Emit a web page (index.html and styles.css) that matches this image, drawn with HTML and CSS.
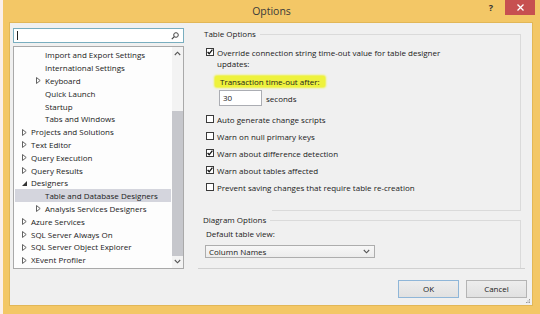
FILE: index.html
```html
<!DOCTYPE html>
<html lang="en">
<head>
    <meta charset="UTF-8">
    <title>Options</title>
    <link rel="stylesheet" href="styles.css">
</head>
<body>

<div class="window">
    <div class="titlebar">
        <span></span>
        <span class="title">Options</span>
        <div class="controls">
            <span class="help">?</span>
            <span class="close">
                <svg width="7" height="7" viewBox="0 0 7 7">
                    <path d="M0.5 0.5 L6.5 6.5 M6.5 0.5 L0.5 6.5" stroke="white" stroke-width="1.3"/>
                </svg>
            </span>
        </div>
    </div>

    <div class="client">
        <!-- arbol de categorias -->
        <div class="left">
            <div class="search">
                <span class="caret"></span>
                <svg class="lupa" width="8" height="8" viewBox="0 0 8 8">
                    <circle cx="5" cy="3" r="2.3" fill="none" stroke="#444" stroke-width="1"/>
                    <line x1="3.3" y1="4.7" x2="0.8" y2="7.2" stroke="#444" stroke-width="1.2"/>
                </svg>
            </div>
            <div class="tree">
                <ul class="nodes">
                    <li class="l2"><span class="twisty"></span>Import and Export Settings</li>
                    <li class="l2"><span class="twisty"></span>International Settings</li>
                    <li class="l2"><span class="twisty closed"></span>Keyboard</li>
                    <li class="l2"><span class="twisty"></span>Quick Launch</li>
                    <li class="l2"><span class="twisty"></span>Startup</li>
                    <li class="l2"><span class="twisty"></span>Tabs and Windows</li>
                    <li class="l1"><span class="twisty closed"></span>Projects and Solutions</li>
                    <li class="l1"><span class="twisty closed"></span>Text Editor</li>
                    <li class="l1"><span class="twisty closed"></span>Query Execution</li>
                    <li class="l1"><span class="twisty closed"></span>Query Results</li>
                    <li class="l1"><span class="twisty open"></span>Designers</li>
                    <li class="l2 selected"><span class="twisty"></span>Table and Database Designers</li>
                    <li class="l2"><span class="twisty closed"></span>Analysis Services Designers</li>
                    <li class="l1"><span class="twisty closed"></span>Azure Services</li>
                    <li class="l1"><span class="twisty closed"></span>SQL Server Always On</li>
                    <li class="l1"><span class="twisty closed"></span>SQL Server Object Explorer</li>
                    <li class="l1"><span class="twisty closed"></span>XEvent Profiler</li>
                </ul>
                <div class="scrollbar">
                    <div class="sb-arrow">
                        <svg width="7" height="5" viewBox="0 0 7 5"><polyline points="0.8,4 3.5,1.2 6.2,4" fill="none" stroke="#555" stroke-width="1.1"/></svg>
                    </div>
                    <div class="sb-track"><div class="sb-thumb"></div></div>
                    <div class="sb-arrow">
                        <svg width="7" height="5" viewBox="0 0 7 5"><polyline points="0.8,1 3.5,3.8 6.2,1" fill="none" stroke="#555" stroke-width="1.1"/></svg>
                    </div>
                </div>
            </div>
        </div>

        <!-- opciones del disenador -->
        <div class="right">
            <div class="group">
                <div class="group-head"><span>Table Options</span><i class="rule"></i></div>
                <div class="group-body first">
                    <div class="check top">
                        <span class="box on"></span>
                        <span>Override connection string time-out value for table designer<br>updates:</span>
                    </div>
                    <div class="hl">Transaction time-out after:</div>
                    <div class="timeout">
                        <span class="num">30</span>
                        <span>seconds</span>
                    </div>
                    <div class="check opt first-opt"><span class="box"></span>Auto generate change scripts</div>
                    <div class="check opt"><span class="box"></span>Warn on null primary keys</div>
                    <div class="check opt"><span class="box on"></span>Warn about difference detection</div>
                    <div class="check opt"><span class="box on"></span>Warn about tables affected</div>
                    <div class="check opt"><span class="box"></span>Prevent saving changes that require table re-creation</div>
                </div>
            </div>

            <div class="group second">
                <div class="group-head"><span>Diagram Options</span><i class="rule"></i></div>
                <div class="group-body">
                    <div class="field-label">Default table view:</div>
                    <div class="select">
                        <span>Column Names</span>
                        <svg width="7" height="5" viewBox="0 0 7 5"><polyline points="0.8,1 3.5,3.8 6.2,1" fill="none" stroke="#555" stroke-width="1.1"/></svg>
                    </div>
                </div>
            </div>

            <div class="separator"></div>

            <div class="buttons">
                <span class="btn default">OK</span>
                <span class="btn">Cancel</span>
            </div>
        </div>

        <svg class="grip" width="5" height="5" viewBox="0 0 5 5">
            <rect x="3" y="0" width="1" height="1" fill="#999"/>
            <rect x="1.5" y="1.5" width="1" height="1" fill="#999"/>
            <rect x="3" y="1.5" width="1" height="1" fill="#999"/>
            <rect x="0" y="3" width="1" height="1" fill="#999"/>
            <rect x="1.5" y="3" width="1" height="1" fill="#999"/>
            <rect x="3" y="3" width="1" height="1" fill="#999"/>
        </svg>
    </div>
</div>

</body>
</html>
```

FILE: styles.css
```css
* {
    box-sizing: border-box;
}

body {
    margin: 0;
    padding: 0;
    background-color: #fbf0ea;
    font-family: "Open Sans", "Noto Sans", sans-serif;
    font-size: 8px;
    color: #1a1a1a;
}

.window {
    margin-left: 3px;
    width: 537px;
    height: 314px;
    background-color: #f3c766;
    overflow: hidden;
}

/* barra de titulo */
.titlebar {
    height: 23px;
    display: grid;
    grid-template-columns: 1fr auto 1fr;
}

.title {
    font-size: 10.5px;
    line-height: 23px;
    color: #3a3a3a;
}

.controls {
    display: flex;
    justify-content: flex-end;
    align-items: flex-start;
}

.help {
    font-size: 9px;
    font-weight: bold;
    color: #333;
    line-height: 16px;
    margin-right: 12px;
}

.close {
    width: 30px;
    height: 15px;
    margin-right: 5px;
    background-color: #c75050;
    display: flex;
    align-items: center;
    justify-content: center;
}

/* area de contenido */
.client {
    position: relative;
    margin: 0 8px 0 7px;
    height: 282px;
    background-color: #f0f0f0;
    box-shadow: 0 0 0 1px #e2b757;
    display: flex;
    gap: 14px;
    padding: 5px 5px 7px 3px;
}

.left {
    width: 171px;
}

.search {
    width: 171px;
    height: 15px;
    border: 1px solid #79aebf;
    background-color: white;
    display: flex;
    align-items: center;
    justify-content: space-between;
    padding: 0 4px 0 3px;
}

.caret {
    width: 1px;
    height: 9px;
    background-color: #222;
}

.tree {
    margin-top: 3px;
    height: 223px;
    border: 1px solid #a9a9a9;
    background-color: #fdfdfd;
    display: flex;
}

.nodes {
    list-style: none;
    margin: 0;
    padding: 1.5px 0 0;
    flex: 1;
}

.nodes li {
    height: 12.8px;
    display: flex;
    align-items: center;
    white-space: nowrap;
}

.nodes .l1 {
    padding-left: 8px;
}

.nodes .l2 {
    padding-left: 22px;
}

.nodes .selected {
    margin: 0 1px;
    padding-left: 21px;
    background-color: #d4d5dd;
}

.twisty {
    width: 9px;
    height: 8px;
    flex-shrink: 0;
    background-repeat: no-repeat;
    background-position: 0 1px;
}

.twisty.closed {
    background-image: url("data:image/svg+xml,%3Csvg xmlns='http://www.w3.org/2000/svg' width='5' height='7'%3E%3Cpath d='M0.5 0.5 L4.2 3.5 L0.5 6.5 Z' fill='none' stroke='%23626262'/%3E%3C/svg%3E");
}

.twisty.open {
    background-image: url("data:image/svg+xml,%3Csvg xmlns='http://www.w3.org/2000/svg' width='5' height='5'%3E%3Cpath d='M5 0 L5 5 L0 5 Z' fill='%23333'/%3E%3C/svg%3E");
    background-position: 0 2px;
}

.scrollbar {
    width: 11px;
    display: flex;
    flex-direction: column;
    background-color: #f3f3f3;
}

.sb-arrow {
    height: 13px;
    display: flex;
    align-items: center;
    justify-content: center;
}

.sb-track {
    flex: 1;
}

.sb-thumb {
    margin-top: 51px;
    height: 145px;
    background-color: #c6c7cc;
}

/* columna derecha */
.right {
    flex: 1;
    display: flex;
    flex-direction: column;
}

.group {
    margin-right: 6px;
}

.group.second {
    margin-top: 3px;
}

.group-head {
    display: flex;
    height: 12px;
    line-height: 12px;
    padding-left: 6px;
}

.second .group-head {
    padding-left: 5px;
}

.group-head .rule {
    flex: 1;
    margin: 6px 0 0 4px;
    border-top: 1px solid #dadada;
    border-right: 1px solid #dadada;
}

.group-body {
    border-right: 1px solid #dadada;
    padding: 2px 0 10px 8px;
}

.group-body.first {
    padding: 6.5px 0 15.5px 8px;
    background: linear-gradient(#dadada, #dadada) no-repeat 74px 100% / calc(100% - 74px) 1px;
}

.check {
    display: flex;
    align-items: center;
    gap: 3px;
}

.check.top {
    align-items: flex-start;
    line-height: 11px;
}

.check.top .box {
    margin-top: 1.5px;
}

.box {
    width: 8px;
    height: 8px;
    flex-shrink: 0;
    border: 1px solid #3a3a3a;
    background-color: white;
}

.box.on {
    background: white url("data:image/svg+xml,%3Csvg xmlns='http://www.w3.org/2000/svg' width='6' height='6'%3E%3Cpath d='M0.6 3 L2.2 4.8 L5.4 0.6' fill='none' stroke='%23111' stroke-width='1.3'/%3E%3C/svg%3E") no-repeat center;
}

.hl {
    width: fit-content;
    margin: 7.5px 0 0 9px;
    padding: 0 5px;
    line-height: 11px;
    background-color: #eef23c;
    box-shadow: 0 0 2px 1px #eef23c;
    border-radius: 2px;
}

.timeout {
    display: flex;
    align-items: center;
    margin: 3px 0 0 13px;
    height: 16px;
}

.num {
    width: 43px;
    height: 16px;
    line-height: 14px;
    border: 1px solid #abadb3;
    background-color: white;
    padding-left: 3px;
    margin-right: 4px;
}

.opt {
    height: 17px;
}

.first-opt {
    margin-top: 4.5px;
}

.field-label {
    line-height: 12px;
}

.select {
    margin: 5px 0 0 -1px;
    width: 170px;
    height: 13px;
    border: 1px solid #adadad;
    background: linear-gradient(#f7f7f7, #ececec);
    display: flex;
    align-items: center;
    justify-content: space-between;
    padding: 0 4px 0 3px;
}

.separator {
    height: 1px;
    margin-right: 2px;
    background-color: #d0d0d0;
}

.buttons {
    display: flex;
    justify-content: flex-end;
    gap: 7px;
    margin-top: 11px;
}

.btn {
    width: 61px;
    height: 18px;
    line-height: 16px;
    text-align: center;
    border: 1px solid #b4b4b4;
    background: linear-gradient(#ededed, #e1e1e1);
}

.btn.default {
    border-color: #8fb6d8;
}

.grip {
    position: absolute;
    right: 1px;
    bottom: 1px;
}
```
